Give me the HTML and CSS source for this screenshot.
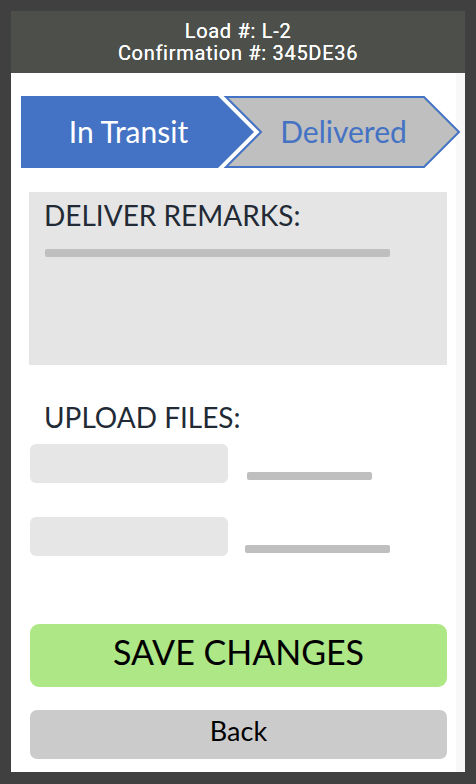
FILE: index.html
```html
<!DOCTYPE html>
<html lang="en">
<head>
    <meta charset="UTF-8">
    <meta name="viewport" content="width=device-width, initial-scale=1.0">
    <title>Load L-2</title>
    <link rel="stylesheet" href="styles.css">
</head>
<body>
    <div class="phone">
        <div class="header">
            <div>Load #: L-2</div>
            <div>Confirmation #: 345DE36</div>
        </div>
        <div class="screen">
            <svg class="steps" width="454" height="72" viewBox="11 96 454 72">
                <polygon points="21,96 218,96 254,132 218,168 21,168" fill="#4472c4"/>
                <polygon points="226,97 424,97 459,132 424,167 226,167 261,132" fill="#bfbfbf" stroke="#4472c4" stroke-width="2"/>
                <text x="128.5" y="143" class="step-text" fill="#fff" text-anchor="middle">In Transit</text>
                <text x="343.5" y="143" class="step-text" fill="#4472c4" text-anchor="middle">Delivered</text>
            </svg>

            <div class="remarks">
                <div class="label">DELIVER REMARKS:</div>
                <div class="bar remarks-bar"></div>
            </div>

            <div class="label upload-label">UPLOAD FILES:</div>
            <div class="file-row">
                <div class="file-box"></div>
                <div class="bar file-bar"></div>
            </div>
            <div class="file-row second">
                <div class="file-box"></div>
                <div class="bar file-bar long"></div>
            </div>

            <button class="btn save">SAVE CHANGES</button>
            <button class="btn back">Back</button>
        </div>
    </div>
</body>
</html>
```

FILE: styles.css
```css
body {
    margin: 0;
    background-color: #404040;
    padding: 11px;
    font-family: Lato, "Open Sans", sans-serif;
}
.phone {
    width: 454px;
    height: 761px;
    display: flex;
    flex-direction: column;
}
.header {
    background-color: #4c4f4a;
    color: #fff;
    font-family: Roboto, sans-serif;
    font-size: 20px;
    line-height: 22px;
    letter-spacing: 0.7px;
    text-align: center;
    padding: 9px 0;
    text-shadow: 0 0 0.4px #fff;
}
.screen {
    flex: 1;
    background: linear-gradient(to left, #f8f8f8 9px, #fff 9px);
    padding: 0 18px;
    display: flex;
    flex-direction: column;
}
.steps {
    display: block;
    margin: 23px -18px 0;
}
.step-text {
    font-family: Lato, sans-serif;
    font-size: 30px;
}
.remarks {
    margin-top: 24px;
    height: 173px;
    box-sizing: border-box;
    background-color: #e5e5e5;
    padding: 5px 0 0 15px;
}
.label {
    font-size: 28px;
    line-height: 36px;
    color: #222a35;
}
.bar {
    height: 8px;
    background-color: #bfbfbf;
    border-radius: 2px;
}
.remarks-bar {
    width: 345px;
    margin: 16px 0 0 1px;
}
.upload-label {
    margin: 34px 0 0 15px;
}
.file-row {
    display: flex;
    align-items: flex-start;
    margin-top: 9px;
}
.file-row.second {
    margin-top: 34px;
}
.file-box {
    width: 198px;
    height: 39px;
    margin-left: 1px;
    background-color: #e6e6e6;
    border-radius: 6px;
}
.file-bar {
    width: 125px;
    margin: 28px 0 0 19px;
}
.file-bar.long {
    width: 145px;
    margin-left: 17px;
}
.btn {
    display: block;
    width: 417px;
    margin-left: 1px;
    border: none;
    font-family: Lato, sans-serif;
    color: #000;
    padding: 0 0 8px;
}
.save {
    margin-top: 68px;
    height: 63px;
    background-color: #ade786;
    border-radius: 9px;
    font-size: 34px;
}
.back {
    margin-top: 23px;
    height: 49px;
    background-color: #cbcbcb;
    border-radius: 7px;
    font-size: 27px;
    padding-bottom: 9px;
}
```
